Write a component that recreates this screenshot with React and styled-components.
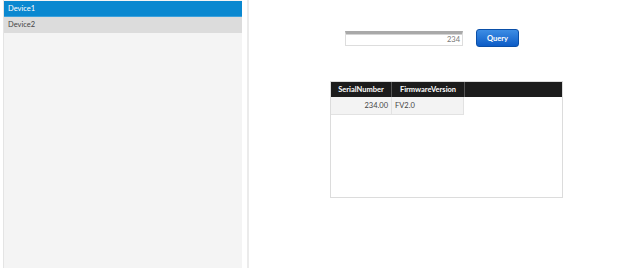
import styled, { createGlobalStyle } from "styled-components";

const GlobalStyle = createGlobalStyle`
  html, body {
    margin: 0;
    padding: 0;
    background: #ffffff;
    font-family: "Lato", "Open Sans", sans-serif;
  }
`;

const Page = styled.div`
  display: flex;
  width: 624px;
  height: 268px;
  overflow: hidden;
`;

const Sidebar = styled.div`
  width: 238px;
  margin-left: 3px;
  border-left: 1px solid #e4e4e4;
  background: #f4f4f4;
  padding-top: 1px;
`;

const DeviceRow = styled.div`
  height: 15px;
  line-height: 15px;
  padding-left: 4px;
  font-size: 7.5px;
  color: ${(p) => (p.$active ? "#ffffff" : "#444444")};
  background: ${(p) => (p.$active ? "#0a88d0" : "#dcdcdc")};
  border-bottom: 1px solid ${(p) => (p.$active ? "#3aa0dc" : "#dcdcdc")};
`;

const Divider = styled.div`
  width: 2px;
  margin-left: 5px;
  background: #ebebeb;
`;

const Content = styled.div`
  flex: 1;
  padding-left: 81px;
`;

const QueryBar = styled.div`
  display: flex;
  align-items: center;
  gap: 13px;
  margin-top: 29px;
  margin-left: 15px;
`;

const Input = styled.div`
  width: 114px;
  height: 11px;
  border: 1px solid #dddddd;
  border-top: 3px solid #a9a9a9;
  background: #ffffff;
  font-size: 7.5px;
  line-height: 11px;
  color: #777777;
  text-align: right;
  padding-right: 2px;
  box-shadow: inset 0 1px 0 #d4d4d4;
`;

const QueryButton = styled.button`
  width: 43px;
  height: 18px;
  border: 1px solid #0a4fa8;
  border-radius: 3px;
  background: linear-gradient(#3d8de4, #0d5cc6);
  color: #ffffff;
  font-family: "Lato", sans-serif;
  font-weight: 700;
  font-size: 7.5px;
  padding: 0;
`;

const Grid = styled.div`
  width: 231px;
  height: 115px;
  margin-top: 34px;
  border: 1px solid #dcdcdc;
  background: #ffffff;
`;

const HeaderRow = styled.div`
  display: flex;
  height: 15px;
  background: #1c1c1c;
`;

const HeaderCell = styled.div`
  width: ${(p) => p.$w}px;
  border-right: 1px solid #555555;
  color: #ffffff;
  font-weight: 700;
  font-size: 7.5px;
  line-height: 15px;
  text-align: center;
`;

const DataRow = styled.div`
  display: flex;
  height: 18px;
`;

const DataCell = styled.div`
  width: ${(p) => p.$w}px;
  background: #f3f3f3;
  border-right: 1px solid #e2e2e2;
  border-bottom: 1px solid #e2e2e2;
  font-size: 7.5px;
  line-height: 18px;
  color: #444444;
  text-align: ${(p) => p.$align};
  padding: 0 3px;
  box-sizing: border-box;
`;

const devices = ["Device1", "Device2"];

export default function App() {
  return (
    <Page>
      <GlobalStyle />
      <Sidebar>
        {devices.map((d, i) => (
          <DeviceRow key={d} $active={i === 0}>
            {d}
          </DeviceRow>
        ))}
      </Sidebar>
      <Divider />
      <Content>
        <QueryBar>
          <Input>234</Input>
          <QueryButton>Query</QueryButton>
        </QueryBar>
        <Grid>
          <HeaderRow>
            <HeaderCell $w={60}>SerialNumber</HeaderCell>
            <HeaderCell $w={72}>FirmwareVersion</HeaderCell>
          </HeaderRow>
          <DataRow>
            <DataCell $w={61} $align="right">234.00</DataCell>
            <DataCell $w={72} $align="left">FV2.0</DataCell>
          </DataRow>
        </Grid>
      </Content>
    </Page>
  );
}
